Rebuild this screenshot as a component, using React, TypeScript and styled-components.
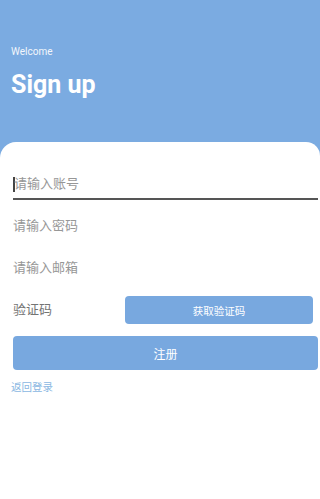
import styled, { createGlobalStyle } from 'styled-components';

const colors = {
  header: '#7babe1',
  button: '#78a8df',
  white: '#ffffff',
  placeholder: '#979797',
  label: '#747474',
  link: '#8ab7e2',
  line: '#555555',
};

const fontStack = 'Roboto, "Noto Sans CJK SC", "Noto Sans", sans-serif';

const GlobalStyle = createGlobalStyle`
  html, body {
    margin: 0;
    padding: 0;
    background: ${colors.white};
    font-family: ${fontStack};
  }
  * {
    box-sizing: border-box;
  }
`;

function App() {
  return (
    <>
      <GlobalStyle />
      <StyledPage>
        <Header>
          <Welcome>Welcome</Welcome>
          <Title>Sign up</Title>
        </Header>
        <Card>
          <FocusedField>
            <Caret />
            <Placeholder>请输入账号</Placeholder>
          </FocusedField>
          <FieldGroup>
            <Field>
              <Placeholder>请输入密码</Placeholder>
            </Field>
            <Field>
              <Placeholder>请输入邮箱</Placeholder>
            </Field>
            <CodeRow>
              <CodeLabel>验证码</CodeLabel>
              <CodeButton type="button">获取验证码</CodeButton>
            </CodeRow>
          </FieldGroup>
          <SubmitButton type="button">注册</SubmitButton>
          <BackLink>返回登录</BackLink>
        </Card>
      </StyledPage>
    </>
  );
}

const StyledPage = styled.div`
  display: flex;
  flex-direction: column;
  min-height: 100vh;
  background: ${colors.header};
`;

const Header = styled.div`
  display: flex;
  flex-direction: column;
  height: 142px;
  padding: 46px 11px 0;
  color: ${colors.white};
`;

const Welcome = styled.div`
  font-size: 10px;
  line-height: 12px;
  opacity: 0.9;
`;

const Title = styled.h1`
  margin: 10px 0 0;
  font-size: 25px;
  line-height: 34px;
  font-weight: 700;
`;

const Card = styled.div`
  flex: 1;
  display: flex;
  flex-direction: column;
  padding: 20px 2px 0 13px;
  background: ${colors.white};
  border-radius: 16px 14px 0 0;
`;

const FocusedField = styled.div`
  display: flex;
  align-items: flex-end;
  height: 38px;
  padding-bottom: 6px;
  border-bottom: 2px solid ${colors.line};
`;

const Caret = styled.span`
  display: inline-block;
  width: 2px;
  height: 15px;
  margin-right: -1px;
  background: #444;
`;

const Placeholder = styled.span`
  font-size: 13px;
  line-height: 16px;
  color: ${colors.placeholder};
`;

const FieldGroup = styled.div`
  display: flex;
  flex-direction: column;
  margin-top: 5px;
`;

const Field = styled.div`
  display: flex;
  align-items: center;
  height: 42px;
`;

const CodeRow = styled(Field)`
  justify-content: space-between;
  padding-right: 5px;
`;

const CodeLabel = styled.span`
  font-size: 13px;
  line-height: 16px;
  color: ${colors.label};
`;

const CodeButton = styled.button`
  width: 188px;
  height: 28px;
  border: none;
  border-radius: 4px;
  background: ${colors.button};
  color: ${colors.white};
  font-family: ${fontStack};
  font-size: 10.5px;
  padding: 0;
`;

const SubmitButton = styled.button`
  height: 34px;
  margin-top: 5px;
  border: none;
  border-radius: 4px;
  background: ${colors.button};
  color: ${colors.white};
  font-family: ${fontStack};
  font-size: 12px;
  padding: 0;
`;

const BackLink = styled.a`
  margin: 12px 0 0 -2px;
  font-size: 10.5px;
  line-height: 12px;
  color: ${colors.link};
  cursor: pointer;
`;

export default App;
